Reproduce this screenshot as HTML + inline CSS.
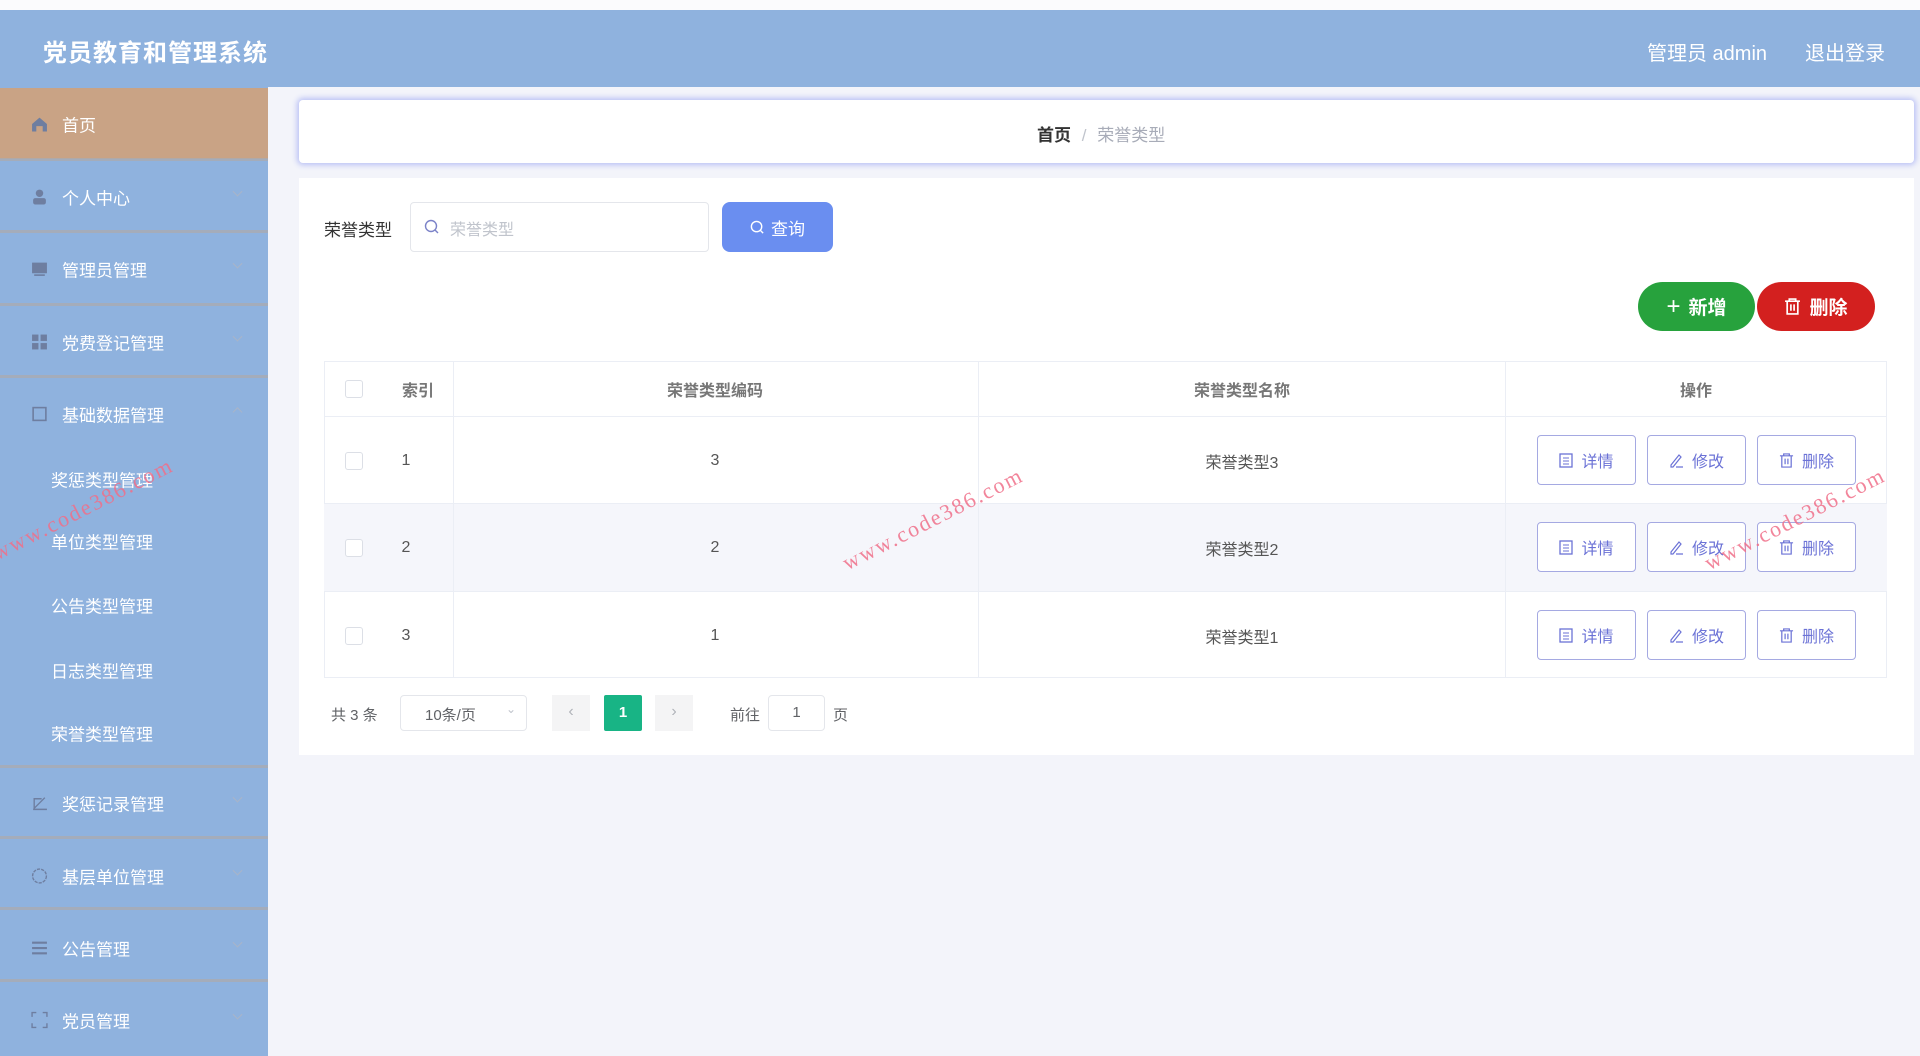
<!DOCTYPE html>
<html><head><meta charset="utf-8">
<style>
*{box-sizing:border-box;margin:0;padding:0}
body{width:1920px;height:1056px;overflow:hidden;background:#f3f4fa;font-family:"Liberation Sans","Noto Sans CJK SC",sans-serif;position:relative}
.abs{position:absolute}
.top{left:0;top:0;width:1920px;height:10px;background:#fbfbfd}
.hdr{left:0;top:10px;width:1920px;height:77px;background:#8fb2de}
.title{left:43px;top:33px;font-size:24px;font-weight:bold;color:#fff;letter-spacing:1px}
.hr{top:37px;font-size:20px;color:#fff}
.side{left:0;top:87px;width:268px;height:969px;background:#8fb2de}
.act{left:0;top:88px;width:268px;height:71px;background:#c9a385}
.sep{left:0;width:268px;height:3px;background:#a9aab0;opacity:.8}
.mi{left:62px;font-size:17px;color:#fff;transform:translateY(-50%)}
.si{left:51px;font-size:17px;color:#fff;transform:translateY(-50%)}
.ic{left:31px;width:17px;height:17px;transform:translateY(-50%)}
.ar{left:234px;width:7px;height:7px;border-right:1.5px solid #a9b4c8;border-bottom:1.5px solid #a9b4c8;transform:translateY(-70%) rotate(45deg)}
.card{background:#fff}
.bc{left:299px;top:100px;width:1615px;height:63px;border-radius:4px;box-shadow:0 0 6px 2px #b9c0f5}
.btnw{border:1px solid #a5a9e2;border-radius:4px;color:#6b72d6;font-size:16px;display:flex;align-items:center;justify-content:center;gap:8px;background:#fff;height:50px;width:99px}
.cell{font-size:16px;color:#555;transform:translate(-50%,-50%)}
.th{font-size:16px;color:#777;font-weight:bold;transform:translate(-50%,-50%)}
.cb{width:18px;height:18px;border:1px solid #dcdfe6;border-radius:3px;background:#fff}
.wm{color:#f0708a;font-family:"Liberation Serif",serif;font-size:22px;transform:rotate(-27deg);transform-origin:left bottom;letter-spacing:2px;opacity:.85}
</style></head><body>
<div class="abs top"></div>
<div class="abs hdr"></div>
<div class="abs title">党员教育和管理系统</div>
<div class="abs hr" style="left:1647px">管理员 admin</div>
<div class="abs hr" style="left:1805px">退出登录</div>

<div class="abs side"></div>
<div class="abs act"></div>
<div class="abs sep" style="top:158px"></div>
<div class="abs sep" style="top:230px"></div>
<div class="abs sep" style="top:303px"></div>
<div class="abs sep" style="top:375px"></div>
<div class="abs sep" style="top:765px"></div>
<div class="abs sep" style="top:836px"></div>
<div class="abs sep" style="top:907px"></div>
<div class="abs sep" style="top:979px"></div>

<svg class="abs ic" style="top:124px" viewBox="0 0 16 16"><path d="M1 8 8 2l7 6v7h-4v-5H5v5H1z" fill="#6e7ea0"/></svg>
<div class="abs mi" style="top:124px">首页</div>
<svg class="abs ic" style="top:197px" viewBox="0 0 16 16"><circle cx="8" cy="4.5" r="3.5" fill="#6e7ea0"/><rect x="2" y="9" width="12" height="6" rx="2" fill="#6e7ea0"/></svg>
<div class="abs mi" style="top:197px">个人中心</div><div class="abs ar" style="top:193px"></div>
<svg class="abs ic" style="top:269px" viewBox="0 0 16 16"><rect x="1" y="2" width="14" height="10" fill="#6e7ea0"/><rect x="3" y="13" width="10" height="1.5" fill="#6e7ea0"/></svg>
<div class="abs mi" style="top:269px">管理员管理</div><div class="abs ar" style="top:265px"></div>
<svg class="abs ic" style="top:342px" viewBox="0 0 16 16"><rect x="1" y="1" width="6" height="6" fill="#6e7ea0"/><rect x="9" y="1" width="6" height="6" fill="#6e7ea0"/><rect x="1" y="9" width="6" height="6" fill="#6e7ea0"/><rect x="9" y="9" width="6" height="6" fill="#6e7ea0"/></svg>
<div class="abs mi" style="top:342px">党费登记管理</div><div class="abs ar" style="top:338px"></div>
<svg class="abs ic" style="top:414px" viewBox="0 0 16 16"><rect x="2" y="2" width="12" height="12" fill="none" stroke="#6e7ea0" stroke-width="1.5"/></svg>
<div class="abs mi" style="top:414px">基础数据管理</div><div class="abs ar" style="top:410px;transform:translateY(-20%) rotate(225deg)"></div>
<div class="abs si" style="top:479px">奖惩类型管理</div>
<div class="abs si" style="top:541px">单位类型管理</div>
<div class="abs si" style="top:605px">公告类型管理</div>
<div class="abs si" style="top:670px">日志类型管理</div>
<div class="abs si" style="top:733px">荣誉类型管理</div>
<svg class="abs ic" style="top:803px" viewBox="0 0 16 16"><path d="M2 14h13M3 14V4h7M3 13 13 3" fill="none" stroke="#6e7ea0" stroke-width="1.3"/></svg>
<div class="abs mi" style="top:803px">奖惩记录管理</div><div class="abs ar" style="top:799px"></div>
<svg class="abs ic" style="top:876px" viewBox="0 0 16 16"><circle cx="8" cy="8" r="6.5" fill="none" stroke="#6e7ea0" stroke-width="1.3" stroke-dasharray="3 1"/></svg>
<div class="abs mi" style="top:876px">基层单位管理</div><div class="abs ar" style="top:872px"></div>
<svg class="abs ic" style="top:948px" viewBox="0 0 16 16"><path d="M1 3h14M1 8h14M1 13h14" stroke="#6e7ea0" stroke-width="2"/></svg>
<div class="abs mi" style="top:948px">公告管理</div><div class="abs ar" style="top:944px"></div>
<svg class="abs ic" style="top:1020px" viewBox="0 0 16 16"><path d="M1 5V1h4M11 1h4v4M15 11v4h-4M5 15H1v-4" fill="none" stroke="#6e7ea0" stroke-width="1.3"/></svg>
<div class="abs mi" style="top:1020px">党员管理</div><div class="abs ar" style="top:1016px"></div>

<div class="abs card bc"></div>
<div class="abs" style="left:1037px;top:121px;font-size:17px;color:#333;font-weight:bold">首页 <span style="color:#c0c4cc;font-weight:normal;margin:0 6px">/</span> <span style="color:#a8acb8;font-weight:normal">荣誉类型</span></div>

<div class="abs card" style="left:299px;top:178px;width:1615px;height:577px"></div>
<div class="abs" style="left:324px;top:216px;font-size:17px;color:#333">荣誉类型</div>
<div class="abs" style="left:410px;top:202px;width:299px;height:50px;border:1px solid #e4e6eb;border-radius:4px;background:#fff"></div>
<svg class="abs" style="left:424px;top:219px" width="16" height="16" viewBox="0 0 16 16"><circle cx="7" cy="7" r="5.5" fill="none" stroke="#7b82c8" stroke-width="1.4"/><path d="M11 11l3 3" stroke="#7b82c8" stroke-width="1.4"/></svg>
<div class="abs" style="left:450px;top:216px;font-size:16px;color:#c0c4cc">荣誉类型</div>
<div class="abs" style="left:722px;top:202px;width:111px;height:50px;border-radius:8px;background:#6a8ef0;color:#fff;font-size:17px;display:flex;align-items:center;justify-content:center;gap:6px"><svg width="15" height="15" viewBox="0 0 16 16"><circle cx="7" cy="7" r="5.5" fill="none" stroke="#fff" stroke-width="1.5"/><path d="M11 11l3 3" stroke="#fff" stroke-width="1.5"/></svg>查询</div>

<div class="abs" style="left:1638px;top:282px;width:117px;height:49px;border-radius:25px;background:#27a23d;color:#fff;font-size:19px;font-weight:bold;display:flex;align-items:center;justify-content:center;gap:8px"><span style="font-size:24px;font-weight:normal">+</span>新增</div>
<div class="abs" style="left:1757px;top:282px;width:118px;height:49px;border-radius:25px;background:#d3201f;color:#fff;font-size:19px;font-weight:bold;display:flex;align-items:center;justify-content:center;gap:8px"><svg width="17" height="17" viewBox="0 0 16 16"><path d="M1 3h14M5 3V1h6v2M3 3v12h10V3M6.5 6v6M9.5 6v6" fill="none" stroke="#fff" stroke-width="1.6"/></svg>删除</div>

<!-- table -->
<div class="abs" style="left:324px;top:361px;width:1563px;height:316px;border:1px solid #ebeef5;border-bottom:none;background:#fff"></div>
<div class="abs" style="left:324px;top:503px;width:1563px;height:88px;background:#f5f6fb"></div>
<div class="abs" style="left:324px;top:416px;width:1563px;height:1px;background:#ebeef5"></div>
<div class="abs" style="left:324px;top:503px;width:1563px;height:1px;background:#ebeef5"></div>
<div class="abs" style="left:324px;top:591px;width:1563px;height:1px;background:#ebeef5"></div>
<div class="abs" style="left:324px;top:677px;width:1563px;height:1px;background:#ebeef5"></div>
<div class="abs" style="left:453px;top:361px;width:1px;height:316px;background:#ebeef5"></div>
<div class="abs" style="left:978px;top:361px;width:1px;height:316px;background:#ebeef5"></div>
<div class="abs" style="left:1505px;top:361px;width:1px;height:316px;background:#ebeef5"></div>

<div class="abs cb" style="left:345px;top:380px"></div>
<div class="abs th" style="left:418px;top:389px">索引</div>
<div class="abs th" style="left:715px;top:389px">荣誉类型编码</div>
<div class="abs th" style="left:1242px;top:389px">荣誉类型名称</div>
<div class="abs th" style="left:1696px;top:389px">操作</div>

<div class="abs cb" style="left:345px;top:452px"></div>
<div class="abs cell" style="left:406px;top:461px">1</div>
<div class="abs cell" style="left:715px;top:461px">3</div>
<div class="abs cell" style="left:1242px;top:461px">荣誉类型3</div>
<div class="abs cb" style="left:345px;top:539px"></div>
<div class="abs cell" style="left:406px;top:548px">2</div>
<div class="abs cell" style="left:715px;top:548px">2</div>
<div class="abs cell" style="left:1242px;top:548px">荣誉类型2</div>
<div class="abs cb" style="left:345px;top:627px"></div>
<div class="abs cell" style="left:406px;top:636px">3</div>
<div class="abs cell" style="left:715px;top:636px">1</div>
<div class="abs cell" style="left:1242px;top:636px">荣誉类型1</div>

<!-- action buttons -->
<div class="abs" style="left:1537px;top:435px;display:flex;gap:11px;flex-direction:column">
</div>
<div class="abs btnw" style="left:1537px;top:435px"><svg width="14" height="15" viewBox="0 0 14 15"><rect x="1" y="1" width="12" height="13" fill="none" stroke="#6b72d6" stroke-width="1.3"/><path d="M4 5h6M4 8h6M4 11h6" stroke="#6b72d6"/></svg>详情</div>
<div class="abs btnw" style="left:1647px;top:435px"><svg width="15" height="15" viewBox="0 0 15 15"><path d="M2 12 10 2l2 2-8 10H2zM7 14h7" fill="none" stroke="#6b72d6" stroke-width="1.2"/></svg>修改</div>
<div class="abs btnw" style="left:1757px;top:435px"><svg width="15" height="15" viewBox="0 0 16 16"><path d="M1 3h14M5 3V1h6v2M3 3v12h10V3M6.5 6v6M9.5 6v6" fill="none" stroke="#6b72d6" stroke-width="1.3"/></svg>删除</div>
<div class="abs btnw" style="left:1537px;top:522px"><svg width="14" height="15" viewBox="0 0 14 15"><rect x="1" y="1" width="12" height="13" fill="none" stroke="#6b72d6" stroke-width="1.3"/><path d="M4 5h6M4 8h6M4 11h6" stroke="#6b72d6"/></svg>详情</div>
<div class="abs btnw" style="left:1647px;top:522px"><svg width="15" height="15" viewBox="0 0 15 15"><path d="M2 12 10 2l2 2-8 10H2zM7 14h7" fill="none" stroke="#6b72d6" stroke-width="1.2"/></svg>修改</div>
<div class="abs btnw" style="left:1757px;top:522px"><svg width="15" height="15" viewBox="0 0 16 16"><path d="M1 3h14M5 3V1h6v2M3 3v12h10V3M6.5 6v6M9.5 6v6" fill="none" stroke="#6b72d6" stroke-width="1.3"/></svg>删除</div>
<div class="abs btnw" style="left:1537px;top:610px"><svg width="14" height="15" viewBox="0 0 14 15"><rect x="1" y="1" width="12" height="13" fill="none" stroke="#6b72d6" stroke-width="1.3"/><path d="M4 5h6M4 8h6M4 11h6" stroke="#6b72d6"/></svg>详情</div>
<div class="abs btnw" style="left:1647px;top:610px"><svg width="15" height="15" viewBox="0 0 15 15"><path d="M2 12 10 2l2 2-8 10H2zM7 14h7" fill="none" stroke="#6b72d6" stroke-width="1.2"/></svg>修改</div>
<div class="abs btnw" style="left:1757px;top:610px"><svg width="15" height="15" viewBox="0 0 16 16"><path d="M1 3h14M5 3V1h6v2M3 3v12h10V3M6.5 6v6M9.5 6v6" fill="none" stroke="#6b72d6" stroke-width="1.3"/></svg>删除</div>

<!-- pagination -->
<div class="abs" style="left:331px;top:704px;font-size:15px;color:#606266">共 3 条</div>
<div class="abs" style="left:400px;top:695px;width:127px;height:36px;border:1px solid #e4e6eb;border-radius:4px;background:#fff;font-size:15px;color:#606266;padding:8px 0 0 24px">10条/页<span style="position:absolute;right:10px;top:6px;color:#c0c4cc;font-size:12px">&#8964;</span></div>
<div class="abs" style="left:552px;top:695px;width:38px;height:36px;background:#f4f4f5;color:#b0b3b9;font-size:16px;text-align:center;line-height:34px">&#8249;</div>
<div class="abs" style="left:604px;top:695px;width:38px;height:36px;background:#18b485;color:#fff;font-size:15px;font-weight:bold;text-align:center;line-height:36px;border-radius:2px">1</div>
<div class="abs" style="left:655px;top:695px;width:38px;height:36px;background:#f4f4f5;color:#b0b3b9;font-size:16px;text-align:center;line-height:34px">&#8250;</div>
<div class="abs" style="left:730px;top:704px;font-size:15px;color:#606266">前往</div>
<div class="abs" style="left:768px;top:695px;width:57px;height:36px;border:1px solid #e4e6eb;border-radius:4px;background:#fff;font-size:15px;color:#606266;text-align:center;line-height:34px">1</div>
<div class="abs" style="left:833px;top:704px;font-size:15px;color:#606266">页</div>

<div class="abs wm" style="left:0px;top:540px">www.code386.com</div>
<div class="abs wm" style="left:850px;top:550px">www.code386.com</div>
<div class="abs wm" style="left:1712px;top:550px">www.code386.com</div>
</body></html>
